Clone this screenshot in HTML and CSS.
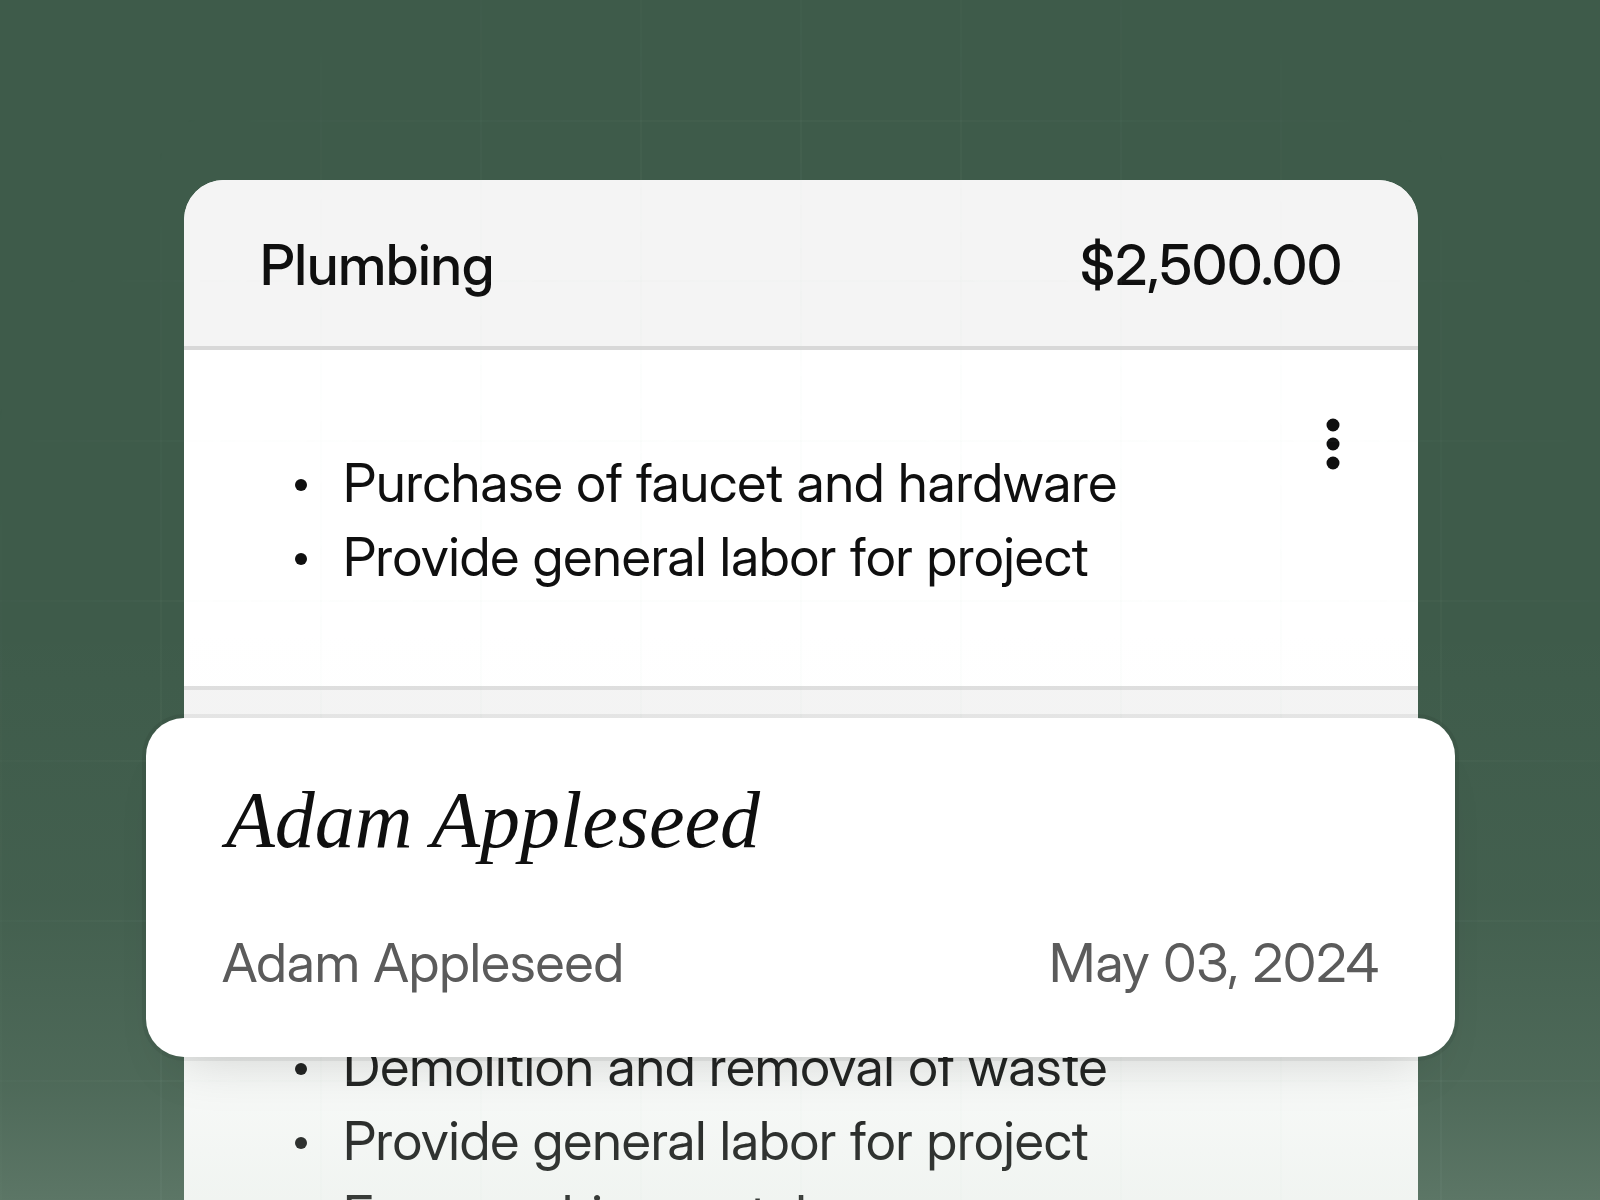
FILE: index.html
```html
<!DOCTYPE html>
<html lang="en">
<head>
<meta charset="utf-8">
<meta name="viewport" content="width=device-width, initial-scale=1">
<title>Estimate</title>
<link rel="stylesheet" href="styles.css">
</head>
<body>
<main class="scene">
  <article class="document">
    <section class="item">
      <header class="item-head"><h2>Plumbing</h2><span>$2,500.00</span></header>
      <div class="item-body">
        <ul class="tasks">
          <li>Purchase of faucet and hardware</li>
          <li>Provide general labor for project</li>
        </ul>
        <button class="more" type="button" aria-label="More options">
          <svg viewBox="0 0 14 52" width="14" height="52"><circle cx="7" cy="7" r="6.5"/><circle cx="7" cy="26" r="6.5"/><circle cx="7" cy="45" r="6.5"/></svg>
        </button>
      </div>
    </section>
    <section class="item">
      <div class="item-head"></div>
      <div class="item-body">
        <ul class="tasks tasks-lower">
          <li>Demolition and removal of waste</li>
          <li>Provide general labor for project</li>
          <li>Free machine rental</li>
        </ul>
      </div>
    </section>
  </article>
  <div class="grid"></div>
  <div class="fade"></div>
  <section class="signature">
    <p class="signed">Adam Appleseed</p>
    <div class="signature-meta"><span>Adam Appleseed</span><time datetime="2024-05-03">May 03, 2024</time></div>
  </section>
</main>
</body>
</html>
```
FILE: styles.css
```css
* { box-sizing: border-box; }
body, h2, p, ul { margin: 0; padding: 0; }
body {
  font: 400 54px/74px "Inter Display", Inter, "Liberation Sans", sans-serif;
  color: #0f0f0f;
  background: #3e5b4a;
}
.scene {
  position: relative;
  height: 100vh;
  overflow: hidden;
  padding: 180px 182px 0 184px;
}
.document { border-radius: 40px 40px 0 0; overflow: hidden; background: #fff; }
.item { border-bottom: 4px solid #dedede; }
.item-head {
  display: flex;
  justify-content: space-between;
  align-items: center;
  height: 170px;
  padding: 4px 76px 0;
  background: #f4f4f4;
  border-bottom: 4px solid #d8d8d8;
  font-size: 56px;
  font-weight: 500;
}
.item-head h2 { font-size: inherit; font-weight: inherit; }
.item-body {
  display: flex;
  justify-content: space-between;
  align-items: flex-start;
  min-height: 336px;
  padding: 68px 78px 90px 111px;
}
.tasks { list-style: none; padding-top: 28px; }
.tasks-lower { padding-top: 102px; }
.tasks li { display: flex; align-items: center; gap: 36px; }
.tasks li::before { content: ""; width: 12px; height: 12px; margin-top: 4px; border-radius: 50%; background: currentColor; }
.more { display: flex; padding: 0; border: 0; background: none; color: inherit; }
.more svg { fill: currentColor; }
.grid, .fade { position: absolute; inset: 0; pointer-events: none; }
.grid {
  background:
    linear-gradient(90deg, rgba(205, 228, 214, .06) 2px, transparent 2px) 0 0 / 160px 160px,
    linear-gradient(rgba(205, 228, 214, .06) 2px, transparent 2px) 0 120px / 160px 160px;
  -webkit-mask-image: radial-gradient(ellipse 960px 1280px at 50% 90%, #000 50%, transparent 100%);
  mask-image: radial-gradient(ellipse 960px 1280px at 50% 90%, #000 50%, transparent 100%);
}
.fade {
  background: linear-gradient(rgba(191, 207, 194, 0) 52%, rgba(191, 207, 194, .04) 75%, rgba(191, 207, 194, .12) 90%, rgba(191, 207, 194, .23));
}
.signature {
  position: absolute;
  top: 718px;
  left: 146px;
  right: 145px;
  padding: 46px 76px 57px;
  border-radius: 38px;
  background: #fff;
  box-shadow: 0 0 0 4px rgba(0, 0, 0, .06), 0 32px 56px -32px rgba(0, 0, 0, .18);
}
.signed { padding-left: 4px; font: italic 400 80px/112px "Liberation Serif", cursive; }
.signature-meta { display: flex; justify-content: space-between; margin-top: 50px; color: #5b5b5b; }
```
